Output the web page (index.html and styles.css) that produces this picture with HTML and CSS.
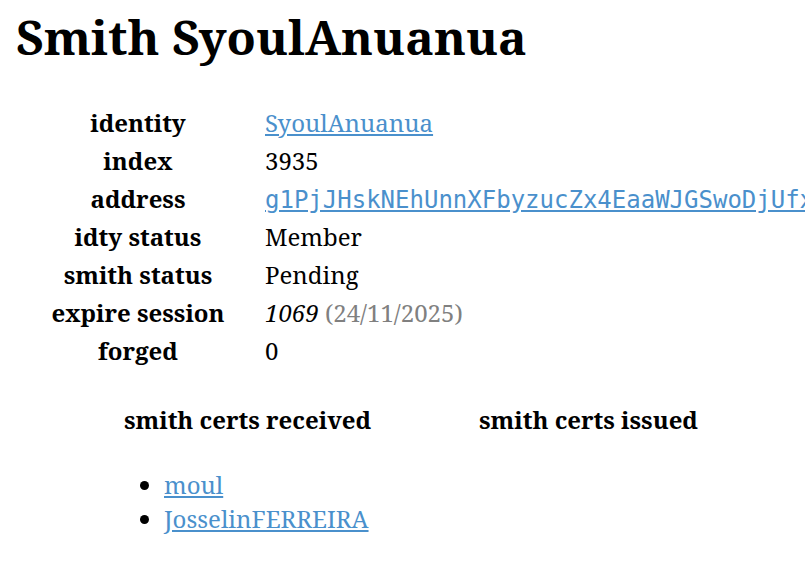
FILE: index.html
```html
<!DOCTYPE html>
<html>
<head>
<meta charset="utf-8">
<link rel="stylesheet" href="styles.css">
</head>
<body>
<h1 class="title">Smith SyoulAnuanua</h1>
<dl class="info">
<dt>identity</dt><dd><a href="#">SyoulAnuanua</a></dd>
<dt>index</dt><dd>3935</dd>
<dt>address</dt><dd><a href="#" class="mono">g1PjJHskNEhUnnXFbyzucZx4EaaWJGSwoDjUfxVwfaQ8hdUsQ</a></dd>
<dt>idty status</dt><dd>Member</dd>
<dt>smith status</dt><dd>Pending</dd>
<dt>expire session</dt><dd><em>1069</em> <span class="muted">(24/11/2025)</span></dd>
<dt>forged</dt><dd>0</dd>
</dl>
<div class="certs">
<div class="col">
<h3>smith certs received</h3>
<ul>
<li><a href="#">moul</a></li>
<li><a href="#">JosselinFERREIRA</a></li>
</ul>
</div>
<div class="col">
<h3>smith certs issued</h3>
</div>
</div>
</body>
</html>
```
FILE: styles.css
```css
html, body { overflow: hidden; }
body {
  margin: 0;
  padding: 0 16px;
  font-family: "Noto Serif", "DejaVu Serif", serif;
  font-size: 24px;
  color: #000;
  background: #fff;
}
.title {
  font-size: 48px;
  margin: 4px 0 34px;
  line-height: 1.362;
  white-space: nowrap;
}
a { color: #4a90cc; }
.mono { font-family: "DejaVu Sans Mono", monospace; font-size: 24px; }
.info {
  display: grid;
  grid-template-columns: 196px auto;
  grid-auto-rows: 38px;
  column-gap: 29px;
  align-items: center;
  margin: 0 0 0 24px;
}
.info dt { font-weight: bold; text-align: center; white-space: nowrap; }
.info dd { margin: 0; white-space: nowrap; }
.muted { color: #808080; }
em { font-style: italic; }
.certs { display: flex; margin-top: 34px; margin-left: 61px; }
.col { width: 341px; flex: none; }
.col h3 { font-size: 24px; line-height: 33px; text-align: center; margin: 0 0 32px; white-space: nowrap; }
.col ul { margin: 0; padding-left: 87px; }
.col li { line-height: 34px; white-space: nowrap; }
```
